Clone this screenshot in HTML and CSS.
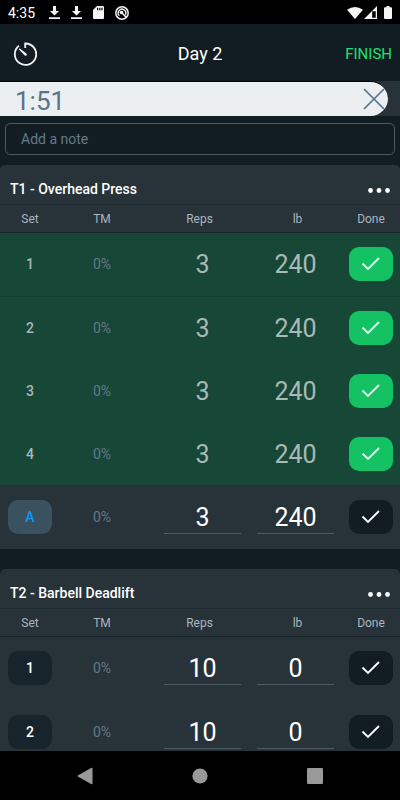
FILE: index.html
```html
<!DOCTYPE html>
<html lang="en">
<head>
<meta charset="utf-8">
<meta name="viewport" content="width=device-width, initial-scale=1">
<title>Day 2</title>
<link rel="stylesheet" href="styles.css">
</head>
<body>
<svg width="0" height="0" class="defs" aria-hidden="true">
  <symbol id="check" viewBox="0 0 20 16"><path d="M1.500 7.500 7 13 18 2" fill="none" stroke="currentColor" stroke-width="1.900"/></symbol>
  <symbol id="dots" viewBox="0 0 22 5"><circle cx="2.500" cy="2.500" r="2.400"/><circle cx="11" cy="2.500" r="2.400"/><circle cx="19.500" cy="2.500" r="2.400"/></symbol>
  <symbol id="download" viewBox="0 0 11 13"><path d="M4 0h3v5h3L5.500 9.500 1 5h3zM0 11.200h11V13H0z"/></symbol>
</svg>

<div class="status">
  <span class="clock">4:35</span>
  <svg width="11" height="13"><use href="#download"/></svg>
  <svg width="11" height="13"><use href="#download"/></svg>
  <svg width="11" height="13" viewBox="0 0 11 13"><path fill-rule="evenodd" d="M4 0h6q1 0 1 1v11q0 1-1 1H1q-1 0-1-1V4zM4 1.800v2.400h1.200V1.800zm2.200 0v2.400h1.200V1.800zm2.200 0v2.400h1.200V1.800z"/></svg>
  <svg width="14" height="14" viewBox="0 0 14 14"><g fill="none" stroke="#f5f5f5"><circle cx="7" cy="7" r="6.200" stroke-width="1.500"/><path d="M4.400 9.800A3.800 3.800 0 1 1 10.400 8.800" stroke-width="1.400"/><path d="M5.500 5.500 11 11" stroke-width="1.600"/></g><circle cx="6.500" cy="6.500" r="1.800"/></svg>
  <span class="signals">
    <svg width="16" height="12" viewBox="0 0 16 12"><path d="M0 2.800Q8-2.800 16 2.800L8 12z"/></svg>
    <svg width="13" height="13" viewBox="0 0 13 13"><path fill-rule="evenodd" d="M13 0v13H0zM11.700 5.200H8.200v6.500h3.500z"/></svg>
    <svg class="battery" width="8" height="13" viewBox="0 0 8 13"><path d="M2.500 0h3v1.300H7q1 0 1 1V12q0 1-1 1H1q-1 0-1-1V2.300q0-1 1-1h1.500z"/></svg>
  </span>
</div>

<header class="topbar">
  <button class="plain timer" aria-label="Timer">
    <svg width="24" height="24" viewBox="0 0 24 24"><path d="M6 3.700A10.700 10.700 0 1 0 12.200 1.500V6" fill="none" stroke="#f2f4f5" stroke-width="1.800"/><path d="M6 7.600q-.3-1.100.9-1l6.500 4.800q1 1.300 0 2.100-.9.800-1.900-.3z" fill="#f2f4f5"/></svg>
  </button>
  <h1>Day 2</h1>
  <button class="plain finish">FINISH</button>
</header>

<main>
  <div class="rest">
    <div class="rest-bar">
      <span>1:51</span>
      <button class="plain" aria-label="Close">
        <svg width="22" height="22" viewBox="0 0 22 22"><path d="M1 1l20 20M21 1L1 21" stroke="#58748a" stroke-width="1.700"/></svg>
      </button>
    </div>
  </div>

  <input class="note" type="text" placeholder="Add a note" aria-label="Add a note">

  <section class="card">
    <div class="card-head">
      <h2>T1 - Overhead Press</h2>
      <button class="plain" aria-label="More"><svg width="22" height="5"><use href="#dots"/></svg></button>
    </div>
    <table>
      <thead>
        <tr><th class="set">Set</th><th class="tm">TM</th><th class="reps">Reps</th><th class="lb">lb</th><th class="mark">Done</th></tr>
      </thead>
      <tbody>
        <tr class="done first"><td>1</td><td class="tm">0%</td><td><input value="3" aria-label="Reps" readonly></td><td><input value="240" aria-label="lb" readonly></td><td><button class="chip check" aria-label="Done"><svg width="20" height="16"><use href="#check"/></svg></button></td></tr>
        <tr class="done"><td>2</td><td class="tm">0%</td><td><input value="3" aria-label="Reps" readonly></td><td><input value="240" aria-label="lb" readonly></td><td><button class="chip check" aria-label="Done"><svg width="20" height="16"><use href="#check"/></svg></button></td></tr>
        <tr class="done"><td>3</td><td class="tm">0%</td><td><input value="3" aria-label="Reps" readonly></td><td><input value="240" aria-label="lb" readonly></td><td><button class="chip check" aria-label="Done"><svg width="20" height="16"><use href="#check"/></svg></button></td></tr>
        <tr class="done"><td>4</td><td class="tm">0%</td><td><input value="3" aria-label="Reps" readonly></td><td><input value="240" aria-label="lb" readonly></td><td><button class="chip check" aria-label="Done"><svg width="20" height="16"><use href="#check"/></svg></button></td></tr>
        <tr><td><button class="chip amrap">A</button></td><td class="tm">0%</td><td><input value="3" aria-label="Reps"></td><td><input value="240" aria-label="lb"></td><td><button class="chip check" aria-label="Done"><svg width="20" height="16"><use href="#check"/></svg></button></td></tr>
      </tbody>
    </table>
  </section>

  <section class="card">
    <div class="card-head">
      <h2>T2 - Barbell Deadlift</h2>
      <button class="plain" aria-label="More"><svg width="22" height="5"><use href="#dots"/></svg></button>
    </div>
    <table>
      <thead>
        <tr><th class="set">Set</th><th class="tm">TM</th><th class="reps">Reps</th><th class="lb">lb</th><th class="mark">Done</th></tr>
      </thead>
      <tbody>
        <tr><td><button class="chip number">1</button></td><td class="tm">0%</td><td><input value="10" aria-label="Reps"></td><td><input value="0" aria-label="lb"></td><td><button class="chip check" aria-label="Done"><svg width="20" height="16"><use href="#check"/></svg></button></td></tr>
        <tr><td><button class="chip number">2</button></td><td class="tm">0%</td><td><input value="10" aria-label="Reps"></td><td><input value="0" aria-label="lb"></td><td><button class="chip check" aria-label="Done"><svg width="20" height="16"><use href="#check"/></svg></button></td></tr>
      </tbody>
    </table>
  </section>
</main>

<nav class="navbar">
  <button class="plain" aria-label="Back"><svg width="16" height="18" viewBox="0 0 16 18"><path d="M15 1v16L.8 9z" stroke-linejoin="round" stroke="#999" fill="#999"/></svg></button>
  <button class="plain" aria-label="Home"><svg width="16" height="16" viewBox="0 0 16 16"><circle cx="8" cy="8" r="7.600" fill="#999"/></svg></button>
  <button class="plain" aria-label="Recent apps"><svg width="16" height="16" viewBox="0 0 16 16"><rect width="16" height="16" rx="1" fill="#999"/></svg></button>
</nav>
</body>
</html>
```
FILE: styles.css
```css
* { box-sizing: border-box; }

body {
  margin: 0;
  height: 100vh;
  display: flex;
  flex-direction: column;
  background: #121d23;
  color: #fff;
  font-family: Roboto, "Liberation Sans", sans-serif;
  font-size: 14px;
}

.defs { position: absolute; }
svg { display: block; }
button, input { font: inherit; color: inherit; }

.plain {
  padding: 0;
  border: 0;
  background: none;
}

.status {
  flex: none;
  height: 24px;
  display: flex;
  align-items: center;
  padding: 1px 8px 0;
  gap: 11px;
  background: #000;
  fill: #f5f5f5;
}
.clock { margin-right: 3px; }
.signals { margin-left: auto; display: flex; gap: 1px; align-items: center; }
.battery { margin-left: 6px; }

.topbar {
  flex: none;
  height: 57px;
  display: grid;
  grid-template-columns: 1fr auto 1fr;
  align-items: center;
  padding: 2px 8px 0;
}
h1 { margin: 0; font-size: 18px; font-weight: 400; }
.timer { justify-self: start; margin-left: 5px; }
.finish { justify-self: end; font-size: 15px; color: #1fe070; }

main { flex: 1; min-height: 0; overflow: hidden; }

.rest { background: #273239; }
.rest-bar {
  height: 35px;
  margin-right: 12px;
  padding: 0 3px 0 15px;
  display: flex;
  align-items: center;
  justify-content: space-between;
  border-top: 1px solid #000;
  border-radius: 0 18px 18px 0;
  background: #ebeff2;
  color: #58748a;
  font-size: 26px;
  line-height: 34px;
}
.rest-bar span { padding-top: 3px; }

.note {
  display: block;
  width: calc(100% - 10px);
  height: 32px;
  margin: 7px 5px 10px;
  padding: 0 15px;
  border: 1px solid #4a5b65;
  border-radius: 5px;
  background: none;
}
.note::placeholder { color: #667a88; opacity: 1; }

.card {
  margin-bottom: 20px;
  border-radius: 5px 5px 0 0;
  background: #273239;
}
.card-head {
  height: 40px;
  padding: 9px 10px 0;
  display: flex;
  align-items: center;
  justify-content: space-between;
  border-bottom: 1px solid #202b32;
}
.card-head svg { fill: #fff; margin-top: 3px; }
h2 { margin: 0; font-size: 14px; font-weight: 500; }

table { width: 100%; table-layout: fixed; border-collapse: collapse; }
th, td { padding: 0; text-align: center; }
th {
  height: 27px;
  padding-top: 1px;
  border-bottom: 1px solid #19242a;
  color: #a9b6bf;
  font-size: 12px;
  font-weight: 400;
}
th.set { width: 60px; }
th.tm { width: 96px; }
th.reps { padding-right: 6px; }
th.lb { padding-left: 4px; }
th.mark { width: 58px; }

td { height: 64px; font-weight: 500; }
td.tm { color: #647989; font-weight: 400; }
.tm { padding-right: 12px; }

td input {
  display: block;
  width: calc(100% - 16px);
  height: 34px;
  margin: 0 auto;
  padding: 2px 0 0;
  border: 0;
  border-bottom: 1px solid #4d5d68;
  background: none;
  font-size: 25px;
  font-weight: 400;
  text-align: center;
}

.chip {
  display: flex;
  align-items: center;
  justify-content: center;
  width: 44px;
  height: 34px;
  margin: 0 auto;
  padding: 0;
  border: 0;
  border-radius: 10px;
  background: #121d23;
}
.number { background: #17242c; }
.amrap { background: #3a5260; color: #0c9cf0; }

.done { background: #174736; color: #a7b9b6; }
.done td { height: 63px; }
.done td input { border-color: transparent; }
.done .check { background: #14c163; color: #e4f8ec; }
.done.first td { height: 64px; border-bottom: 1px solid #153d31; }

.navbar {
  flex: none;
  height: 49px;
  display: grid;
  grid-template-columns: repeat(3, 16px);
  justify-content: center;
  align-items: center;
  gap: 99px;
  background: #000;
}
```
